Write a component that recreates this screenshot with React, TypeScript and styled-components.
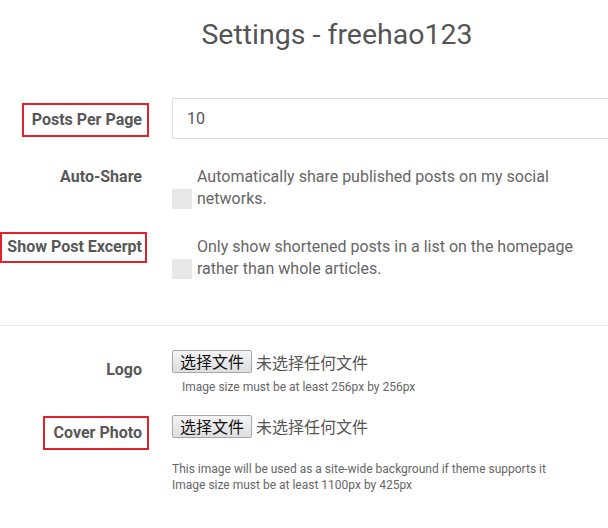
import React from "react";
import styled, { createGlobalStyle } from "styled-components";

const Global = createGlobalStyle`
  html, body { margin: 0; padding: 0; background: #fff; overflow: hidden; }
  body { font-family: Roboto, "Noto Sans", sans-serif; color: #555; }
`;

const Page = styled.div`
  width: 608px;
  overflow: hidden;
`;

const Title = styled.h1`
  margin: 17px 0 0 66px;
  font-size: 28.5px;
  line-height: 36px;
  font-weight: 400;
  color: #555;
  text-align: center;
`;

const Form = styled.div<{ $top: number }>`
  display: flex;
  flex-direction: column;
  padding-top: ${(p) => p.$top}px;
`;

const Row = styled.div<{ $mt?: number }>`
  display: grid;
  grid-template-columns: 142px 1fr;
  column-gap: 30px;
  margin-top: ${(p) => p.$mt ?? 0}px;
`;

const Label = styled.div<{ $pt?: number }>`
  text-align: right;
  font-weight: 700;
  font-size: 16px;
  line-height: 22px;
  color: #585858;
  padding-top: ${(p) => p.$pt ?? 0}px;
  white-space: nowrap;
`;

const Marked = styled.span<{ $inset: string }>`
  position: relative;
  display: inline-block;
  &::after {
    content: "";
    position: absolute;
    inset: ${(p) => p.$inset};
    border: 2px solid #e3212b;
    pointer-events: none;
  }
`;

const TextInput = styled.input`
  box-sizing: border-box;
  width: 470px;
  height: 41px;
  border: 1px solid #e0e0e0;
  padding: 0 14px;
  font-family: Roboto, sans-serif;
  font-size: 16px;
  color: #555;
  outline: none;
  background: #fff;
`;

const CheckLine = styled.div`
  display: flex;
  align-items: flex-end;
  gap: 5px;
`;

const Box = styled.span`
  flex: none;
  width: 20px;
  height: 20px;
  margin-bottom: 1px;
  background: #e8e8e8;
`;

const Desc = styled.div`
  max-width: 400px;
  font-size: 16px;
  line-height: 22px;
  color: #666;
`;

const Rule = styled.hr`
  border: none;
  border-top: 1px solid #e6e6e6;
  margin: 45px 0 0;
  width: 608px;
`;

const FileLine = styled.div`
  display: flex;
  align-items: center;
  gap: 4px;
  height: 23px;
`;

const FileButton = styled.button`
  box-sizing: border-box;
  width: 80px;
  height: 23px;
  padding: 0;
  border: 1px solid #a6a6a6;
  border-radius: 2px;
  background: linear-gradient(#f4f4f4, #dedede);
  font-family: "Noto Sans CJK SC", sans-serif;
  font-size: 16px;
  line-height: 21px;
  color: #111;
`;

const FileName = styled.span`
  font-family: "Noto Sans CJK SC", sans-serif;
  font-size: 16px;
  color: #555;
`;

const Help = styled.div<{ $indent?: number; $mt: number }>`
  font-size: 12px;
  line-height: 16.5px;
  color: #666;
  padding-left: ${(p) => p.$indent ?? 0}px;
  margin-top: ${(p) => p.$mt}px;
`;

function FilePicker() {
  return (
    <FileLine>
      <FileButton type="button">选择文件</FileButton>
      <FileName>未选择任何文件</FileName>
    </FileLine>
  );
}

export default function App() {
  return (
    <Page>
      <Global />
      <Title>Settings - freehao123</Title>
      <Form $top={45}>
        <Row>
          <Label $pt={11}>
            <Marked $inset="-6px -7px -6px -10px">Posts Per Page</Marked>
          </Label>
          <div>
            <TextInput defaultValue="10" />
          </div>
        </Row>
        <Row $mt={27}>
          <Label>Auto-Share</Label>
          <CheckLine>
            <Box />
            <Desc>Automatically share published posts on my social networks.</Desc>
          </CheckLine>
        </Row>
        <Row $mt={26}>
          <Label>
            <Marked $inset="-4px -5px -5px -7px">Show Post Excerpt</Marked>
          </Label>
          <CheckLine>
            <Box />
            <Desc>Only show shortened posts in a list on the homepage rather than whole articles.</Desc>
          </CheckLine>
        </Row>
      </Form>
      <Rule />
      <Form $top={24}>
        <Row>
          <Label $pt={9}>Logo</Label>
          <div>
            <FilePicker />
            <Help $indent={10} $mt={6}>Image size must be at least 256px by 256px</Help>
          </div>
        </Row>
        <Row $mt={19}>
          <Label $pt={7}>
            <Marked $inset="-6px -7px -6px -11px">Cover Photo</Marked>
          </Label>
          <div>
            <FilePicker />
            <Help $mt={23}>
              This image will be used as a site-wide background if theme supports it
              <br />
              Image size must be at least 1100px by 425px
            </Help>
          </div>
        </Row>
      </Form>
    </Page>
  );
}
